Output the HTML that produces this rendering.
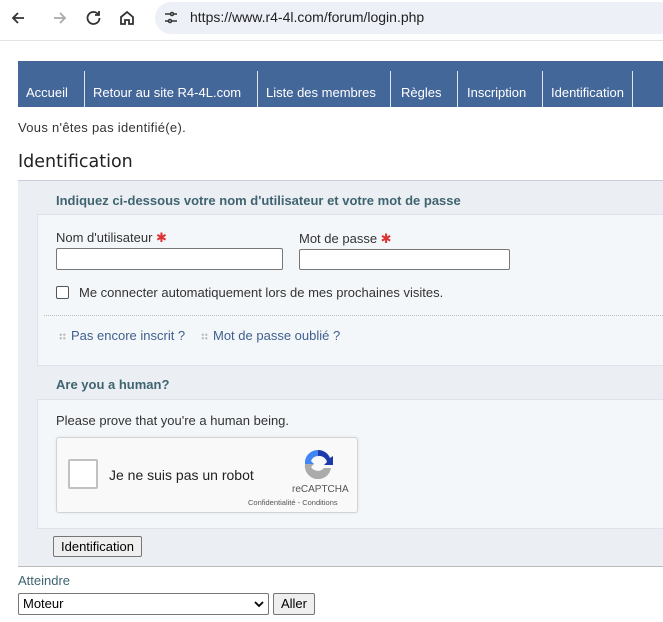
<!DOCTYPE html>
<html><head><meta charset="utf-8"><style>
body{margin:0;width:663px;height:622px;overflow:hidden;background:#fff;font-family:"Liberation Sans",Arial,sans-serif;font-size:13px;color:#333;position:relative}
.a{position:absolute;white-space:nowrap}
.nav{left:18px;top:61px;width:645px;height:46px;background:#44679a}
.nav span{position:absolute;top:24px;color:#fff;font-size:13px}
.sep{position:absolute;top:10px;width:1px;height:36px;background:#dfe6ef}
.inp{position:absolute;background:#fff;border:1px solid #777;border-radius:2px}
.lnk{color:#3f5f8f;font-size:13px}
.dots{display:inline-block;width:7px;height:7px;background:radial-gradient(circle,#bbb 1px,transparent 1.3px) 0 0/3.5px 3.5px;margin-right:5px}
</style></head><body>
<div class="a" style="left:0;top:0;width:663px;height:40px;background:#fff;border-bottom:1px solid #e3e3e3"></div>
<div class="a" style="left:155px;top:2px;width:520px;height:32px;border-radius:16px;background:#edf0f7"></div>
<svg class="a" style="left:10px;top:9px" width="140" height="18" viewBox="0 0 140 18" fill="none" stroke="#333" stroke-width="1.8">
<path d="M14 9H3M8 4L3 9l5 5"/>
<path d="M44 9h11M50 4l5 5-5 5" stroke="#aaa"/>
<path d="M88 5a6 6 0 1 0 1.5 4M89 2v4h-4"/>
<path d="M111 8l6-5 6 5v7h-4v-4h-4v4h-4z"/>
</svg>
<svg class="a" style="left:164px;top:11px" width="14" height="14" viewBox="0 0 14 14" stroke="#333" stroke-width="1.6" fill="none"><path d="M1 3h5M9 3h4M1 10h4M8 10h5"/><circle cx="8" cy="3" r="1.5"/><circle cx="6" cy="10" r="1.5"/></svg>
<div class="a" style="left:190px;top:9px;font-size:14px;color:#222">https://www.r4-4l.com/forum/login.php</div>

<div class="a nav">
<span style="left:8px">Accueil</span><div class="sep" style="left:66px"></div>
<span style="left:75px">Retour au site R4-4L.com</span><div class="sep" style="left:239px"></div>
<span style="left:248px">Liste des membres</span><div class="sep" style="left:372px"></div>
<span style="left:383px">Règles</span><div class="sep" style="left:439px"></div>
<span style="left:449px">Inscription</span><div class="sep" style="left:524px"></div>
<span style="left:533px">Identification</span><div class="sep" style="left:614px"></div>
</div>
<div class="a" style="left:18px;top:120px;font-size:13px;letter-spacing:0.3px">Vous n'êtes pas identifié(e).</div>
<div class="a" style="left:18px;top:152px;font-size:17.5px;font-family:'DejaVu Sans',sans-serif;color:#222">Identification</div>

<div class="a" style="left:18px;top:180px;width:645px;height:385px;background:#ebeff3;border-top:1px solid #ccd;border-bottom:1px solid #bbb"></div>
<div class="a" style="left:56px;top:193px;font-weight:bold;color:#3f6470">Indiquez ci-dessous votre nom d'utilisateur et votre mot de passe</div>
<div class="a" style="left:37px;top:214px;width:630px;height:150px;background:#f4f7fa;border:1px solid #dde3ea"></div>
<div class="a" style="left:56px;top:230px">Nom d'utilisateur <span style="color:#d33">✱</span></div>
<div class="a" style="left:299px;top:231px">Mot de passe <span style="color:#d33">✱</span></div>
<div class="inp" style="left:56px;top:248px;width:225px;height:20px"></div>
<div class="inp" style="left:299px;top:249px;width:209px;height:19px"></div>
<div class="a" style="left:56px;top:286px;width:11px;height:11px;border:1px solid #555;border-radius:2px;background:#fff"></div>
<div class="a" style="left:79px;top:285px">Me connecter automatiquement lors de mes prochaines visites.</div>
<div class="a" style="left:44px;top:315px;width:619px;border-top:1px dotted #bbb"></div>
<div class="a lnk" style="left:59px;top:328px"><span class="dots"></span>Pas encore inscrit ?</div>
<div class="a lnk" style="left:201px;top:328px"><span class="dots"></span>Mot de passe oublié ?</div>
<div class="a" style="left:56px;top:377px;font-weight:bold;color:#3f6470">Are you a human?</div>
<div class="a" style="left:37px;top:399px;width:630px;height:128px;background:#f4f7fa;border:1px solid #dde3ea"></div>
<div class="a" style="left:56px;top:413px">Please prove that you're a human being.</div>
<div class="a" style="left:56px;top:437px;width:300px;height:74px;background:#f9f9f9;border:1px solid #d3d3d3;border-radius:3px;box-shadow:0 0 3px rgba(0,0,0,.08)"></div>
<div class="a" style="left:68px;top:459px;width:26px;height:26px;background:#fff;border:2px solid #c1c1c1;border-radius:2px"></div>
<div class="a" style="left:109px;top:467px;font-size:14px;color:#222">Je ne suis pas un robot</div>
<svg class="a" style="left:302px;top:447px" width="32" height="32" viewBox="0 0 32 32"><path d="M16 3a13 13 0 0 1 12 8l3-2v9h-9l3-3a8 8 0 0 0-9-6z" fill="#1c3aa9"/><path d="M3 14A13 13 0 0 1 16 3v6a8 8 0 0 0-7 5l3 3H3z" fill="#4285f4"/><path d="M3 17h9l-3 3a8 8 0 0 0 13 1h7A13 13 0 0 1 3 17z" fill="#ababab"/></svg>
<div class="a" style="left:292px;top:484px;font-size:10px;color:#555">reCAPTCHA</div>
<div class="a" style="left:248px;top:498px;font-size:7.5px;color:#555">Confidentialité - Conditions</div>
<div class="a" style="left:53px;top:536px;width:87px;height:19px;background:#efefef;border:1px solid #767676;border-radius:2px;text-align:center;line-height:19px;color:#000">Identification</div>
<div class="a" style="left:18px;top:573px;color:#3f6470">Atteindre</div>
<div class="a" style="left:18px;top:593px;width:249px;height:20px;border:1px solid #767676;border-radius:2px;background:#fff;line-height:20px;color:#000"><span style="padding-left:4px">Moteur</span><svg style="position:absolute;right:4px;top:6px" width="10" height="8" viewBox="0 0 10 8"><path d="M1 2l4 4 4-4" stroke="#000" stroke-width="1.8" fill="none"/></svg></div>
<div class="a" style="left:273px;top:593px;width:40px;height:20px;background:#efefef;border:1px solid #767676;border-radius:2px;text-align:center;line-height:20px;color:#000">Aller</div>
</body></html>
